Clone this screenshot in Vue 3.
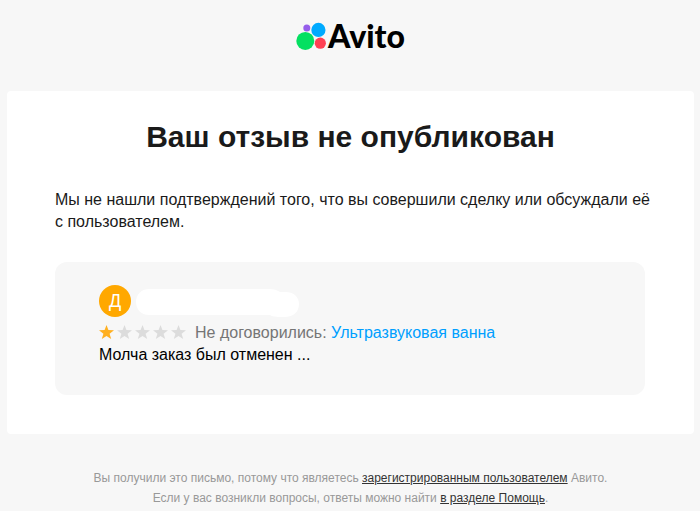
<script setup>
const rating = 1
const stars = [1, 2, 3, 4, 5]
</script>

<template>
  <div class="mail">
    <header class="header">
      <a class="logo" href="#">
        <svg class="logo-mark" viewBox="0 0 30 28" width="30" height="28" aria-hidden="true">
          <circle cx="10.8" cy="5.9" r="3.5" fill="#965eeb" />
          <circle cx="22.4" cy="7.9" r="7.1" fill="#00aaff" />
          <circle cx="9.3" cy="18.9" r="9" fill="#04e061" />
          <circle cx="24.3" cy="21.2" r="5.6" fill="#ff4053" />
        </svg>
        <span class="logo-name">Avito</span>
      </a>
    </header>

    <main class="card">
      <h1 class="title">Ваш отзыв не опубликован</h1>
      <p class="message">
        Мы не нашли подтверждений того, что вы совершили сделку или обсуждали её
        с пользователем.
      </p>

      <section class="review">
        <div class="author">
          <span class="avatar">Д</span>
          <svg class="author-name" viewBox="0 0 164 30" width="164" height="30" aria-hidden="true">
            <path
              d="M13 3H133C138 3 141 4 144 6H150C158 6 163 11 163 18C163 26 157 31 149 31C143 31 137 31 134 29H13C5 29 0 23 0 16C0 9 5 3 13 3Z"
              fill="#ffffff"
            />
          </svg>
        </div>
        <div class="rating-row">
          <span class="stars" role="img" :aria-label="`${rating} / 5`">
            <svg
              v-for="n in stars"
              :key="n"
              class="star"
              :class="{ filled: n <= rating }"
              viewBox="0 0 16 16"
              width="16"
              height="16"
            >
              <path d="M7.500 0L9.400 5.100L15 5.300L10.600 8.800L12.200 14L7.500 11L2.800 14L4.400 8.800L0 5.300L5.600 5.100Z" />
            </svg>
          </span>
          <span class="deal">Не договорились: <a class="item" href="#">Ультразвуковая ванна</a></span>
        </div>
        <p class="review-text">Молча заказ был отменен ...</p>
      </section>
    </main>

    <footer class="footer">
      <p>
        Вы получили это письмо, потому что являетесь
        <a href="#">зарегистрированным пользователем</a> Авито.
      </p>
      <p>
        Если у вас возникли вопросы, ответы можно найти
        <a href="#">в разделе Помощь</a>.
      </p>
    </footer>
  </div>
</template>

<style>
body {
  margin: 0;
  background: #f7f7f7;
}
</style>

<style scoped>
.mail {
  padding: 0 6px 0 7px;
  font-family: "Liberation Sans", Arial, sans-serif;
  font-size: 16px;
  line-height: 22px;
  color: #1a1a1a;
}

p,
h1 {
  margin: 0;
}

.header {
  display: flex;
  justify-content: center;
  padding: 20px 0 39px;
}

.logo {
  display: flex;
  align-items: center;
  gap: 2px;
  height: 32px;
  color: #000000;
  text-decoration: none;
}

.logo-mark {
  flex: none;
}

.logo-name {
  font-family: Lato, sans-serif;
  font-size: 32px;
  font-weight: 900;
  line-height: 32px;
}

.card {
  padding: 28px 0 39px;
  border-radius: 4px;
  background: #ffffff;
}

.title {
  font-size: 30px;
  font-weight: 700;
  line-height: 36px;
  text-align: center;
}

.message {
  margin-top: 34px;
  padding: 0 32px 0 48px;
}

.review {
  margin: 29px 49px 0 48px;
  padding: 22px 44px 29px;
  border-radius: 12px;
  background: #f7f7f7;
}

.author {
  display: flex;
  align-items: center;
  gap: 5px;
  height: 33px;
}

.avatar {
  display: flex;
  align-items: center;
  justify-content: center;
  width: 32px;
  height: 32px;
  border-radius: 50%;
  background: #ffa800;
  font-size: 18px;
  color: #ffffff;
}

.author-name {
  overflow: visible;
}

.rating-row {
  display: flex;
  align-items: center;
  gap: 8px;
  margin-top: 5px;
}

.stars {
  display: flex;
  gap: 2px;
}

.star {
  fill: #dcdcdc;
}

.star.filled {
  fill: #ffb021;
}

.deal {
  color: #757575;
}

.item {
  color: #009fff;
  text-decoration: none;
}

.review-text {
  color: #000000;
}

.footer {
  padding-top: 34px;
  font-size: 12px;
  line-height: 20px;
  color: #999999;
  text-align: center;
}

.footer a {
  color: #333333;
}
</style>
